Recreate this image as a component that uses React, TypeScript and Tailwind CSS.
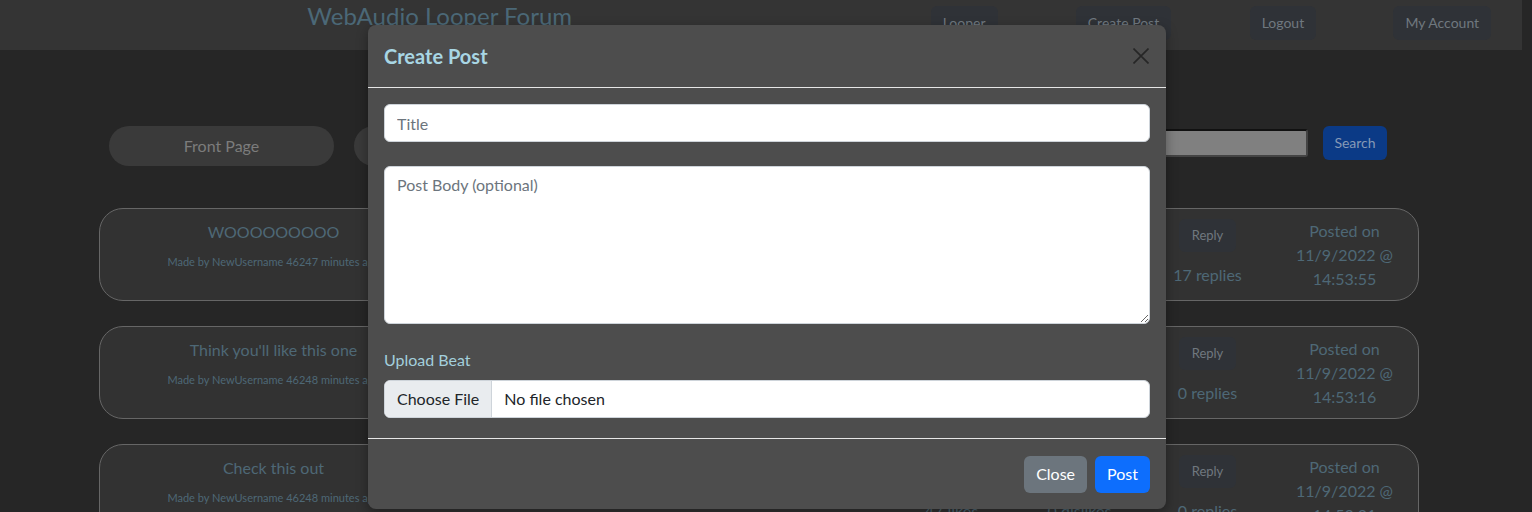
const NAV = ["Looper", "Create Post", "Logout", "My Account"];

const POSTS = [
  { title: "WOOOOOOOOO", mins: 46247, likes: 17, dislikes: 0, replies: 17, time: "14:53:55" },
  { title: "Think you'll like this one", mins: 46248, likes: 3, dislikes: 0, replies: 0, time: "14:53:16" },
  { title: "Check this out", mins: 46248, likes: 47, dislikes: 0, replies: 0, time: "14:53:21" },
];

const FONT = "font-['Lato','Noto_Sans',sans-serif]";

export default function App() {
  return (
    <div className={`relative h-[512px] w-full overflow-hidden bg-[#262626] ${FONT}`}>

      {/* Top Nav */}
      <div className="flex h-[50px] w-[1522px] bg-[#343434]">
        <div className="flex w-[885px] justify-center pr-[5px]">
          <span className="text-[24px] leading-[32px] text-[#4b6877]">WebAudio Looper Forum</span>
        </div>
        {NAV.map(n => (
          <div key={n} className="flex w-[159.5px] justify-center pt-[6px]">
            <button className="h-[34px] rounded-md bg-[#2f3237] px-3 text-sm text-[#6f787f]">{n}</button>
          </div>
        ))}
      </div>

      {/* Filter + Search */}
      <div className="mt-[76px] flex w-[1522px] items-start pl-[109px] pr-[135px]">
        <div className="flex h-10 w-[225px] items-center justify-center rounded-full bg-[#3a3a3a] text-base text-[#7c7c7c]">Front Page</div>
        <div className="ml-5 flex h-10 w-[225px] items-center justify-center rounded-full bg-[#3a3a3a] text-base text-[#7c7c7c]">Top Posts</div>
        <div className="ml-auto flex items-center">
          <div className="h-[28px] w-[380px] rounded-[3px] border-2 border-t-[#111] border-l-[#111] border-r-[#444] border-b-[#444] bg-[#808080]" />
          <button className="ml-[15px] h-[34px] w-16 rounded-md bg-[#0b3a86] text-sm text-[#8599b6]">Search</button>
        </div>
      </div>

      {/* Posts */}
      <div className="ml-[99px] mt-[42px] flex w-[1320px] flex-col gap-[25px]">
        {POSTS.map(p => (
          <div key={p.title} className="grid h-[93px] grid-cols-[347px_441px_127px_129px_127px_147px] rounded-[24px] border border-[#666] bg-[#323232] text-[#4e6876]">
            <div className="flex flex-col items-center pt-[11px]">
              <span className="text-base leading-6">{p.title}</span>
              <span className="mt-[10px] text-[11px]">Made by NewUsername {p.mins} minutes ago</span>
            </div>
            <div />
            <div className="flex flex-col items-center justify-end pb-[13px] text-base leading-6">{p.likes} likes</div>
            <div className="flex flex-col items-center justify-end pb-[13px] text-base leading-6">{p.dislikes} dislikes</div>
            <div className="flex flex-col items-center pt-[10px]">
              <button className="h-[33px] w-[57px] rounded-md bg-[#2f3237] text-[13px] text-[#6f787f]">Reply</button>
              <span className="mt-[11px] text-base leading-6">{p.replies} replies</span>
            </div>
            <div className="flex flex-col items-center pt-[10px] text-base leading-6">
              <span>Posted on</span>
              <span>11/9/2022 @</span>
              <span>{p.time}</span>
            </div>
          </div>
        ))}
      </div>

      {/* Create Post Modal */}
      <div className="absolute left-[368px] top-[25px] flex w-[798px] flex-col rounded-lg bg-[#4d4d4d] shadow-[0_4px_12px_rgba(0,0,0,0.35)]">
        <div className="box-border flex h-[63px] items-center justify-between border-b border-[#e6e6e6] pl-4 pr-[17px]">
          <h2 className="text-[20px] font-bold text-[#a8d6e4]">Create Post</h2>
          <svg width="16" height="16" viewBox="0 0 16 16" className="text-[#262626]">
            <path d="M0.5 0.5L15.5 15.5M15.5 0.5L0.5 15.5" stroke="currentColor" strokeWidth="1.6" />
          </svg>
        </div>

        <div className="flex flex-col px-4 pt-4 pb-[20px]">
          <input
            placeholder="Title"
            className="h-[38px] rounded-md border border-[#ced4da] bg-white px-3 text-base text-[#212529] placeholder:text-[#6c757d] outline-none"
          />
          <textarea
            placeholder="Post Body (optional)"
            className="mt-6 h-[158px] rounded-md border border-[#ced4da] bg-white px-3 py-[6px] text-base text-[#212529] placeholder:text-[#6c757d] outline-none"
          />
          <label className="mt-6 mb-2 text-base leading-6 text-[#a3cfdc]">Upload Beat</label>
          <div className="flex h-[38px] overflow-hidden rounded-md border border-[#ced4da] bg-white text-base text-[#212529]">
            <span className="flex items-center border-r border-[#ced4da] bg-[#e9ecef] px-3">Choose File</span>
            <span className="flex items-center px-3">No file chosen</span>
          </div>
        </div>

        <div className="flex h-[71px] items-center justify-end gap-2 border-t border-[#e6e6e6] px-4">
          <button className="h-[37px] rounded-md bg-[#6c757d] px-3 text-base text-white">Close</button>
          <button className="h-[37px] rounded-md bg-[#0d6efd] px-3 text-base text-white">Post</button>
        </div>
      </div>
    </div>
  );
}
